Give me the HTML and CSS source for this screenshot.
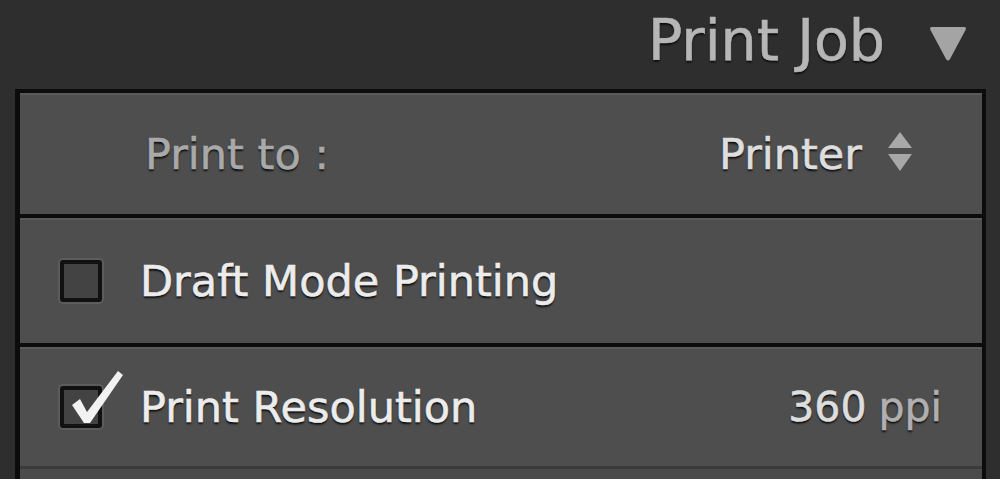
FILE: index.html
```html
<!DOCTYPE html>
<html lang="en">
<head>
    <meta charset="UTF-8">
    <meta name="viewport" content="width=device-width, initial-scale=1.0">
    <title>Print Job</title>
    <link rel="stylesheet" href="styles.css">
</head>
<body>
    <div class="panel-header">
        <h2>Print Job</h2>
        <svg class="collapse" viewBox="0 0 40 40" width="40" height="40">
            <path d="M4 4 L36 4 Q39 4 37.5 7 L22 36 Q20 39 18 36 L2.5 7 Q1 4 4 4 Z" fill="#a4a4a4"/>
        </svg>
    </div>

    <div class="panel">
        <div class="row row-select">
            <span class="label">Print to :</span>
            <span class="value">Printer
                <svg class="updown" viewBox="0 0 24 40" width="24" height="40">
                    <path d="M12 0 L24 16 L0 16 Z" fill="#a8a8a8"/>
                    <path d="M0 22 L24 22 L12 39 Z" fill="#a8a8a8"/>
                </svg>
            </span>
        </div>
        <div class="row">
            <span class="checkbox"></span>
            <span class="name">Draft Mode Printing</span>
        </div>
        <div class="row">
            <span class="checkbox checked">
                <svg class="tick" viewBox="0 0 60 60" width="60" height="60">
                    <path d="M4 35 L12 29 L19 42 L50 1 L55 5 L22 53 L16 53 Z" fill="#f2f2f2"/>
                </svg>
            </span>
            <span class="name">Print Resolution</span>
            <span class="value res">360 <span class="unit">ppi</span></span>
        </div>
        <div class="row row-next"></div>
    </div>
</body>
</html>
```

FILE: styles.css
```css
body {
    margin: 0;
    background-color: #2e2e2e;
    font-family: "DejaVu Sans", "Liberation Sans", sans-serif;
    font-size: 43px;
    height: 479px;
    overflow: hidden;
}

.panel-header {
    height: 89px;
    display: flex;
    justify-content: flex-end;
    align-items: center;
    padding-right: 32px;
}
.panel-header h2 {
    margin: 0 43px 0 0;
    font-size: 57px;
    font-weight: normal;
    color: #b6b6b6;
    -webkit-text-stroke: 0.6px #b6b6b6;
    text-shadow: 0 2px 2px rgba(0, 0, 0, 0.8);
    padding-bottom: 10px;
}
.collapse {
    margin-bottom: 4px;
}

.panel {
    margin-left: 15px;
    width: 962px;
    background: #0c0c0c;
    border-left: 5px solid #0c0c0c;
    border-right: 4px solid #0c0c0c;
    border-top: 4px solid #0c0c0c;
    display: flex;
    flex-direction: column;
    gap: 4px;
}

.row {
    display: flex;
    align-items: center;
    background: #4e4e4e;
    box-shadow: inset 0 2px 0 #5a5a5a;
    padding: 0 40px;
    height: 121px;
    color: #ececec;
    -webkit-text-stroke: 0.6px currentColor;
    text-shadow: 0 2px 2px rgba(0, 0, 0, 0.85);
}
.row + .row {
    height: 125px;
}
.row:nth-child(3) {
    height: 119px;
}
.row.row-next {
    height: 10px;
    margin-top: -4px;
    border-top: 3px solid #3a3a3a;
    box-shadow: none;
    background: #4b4b4b;
}

.row-select {
    padding-left: 125px;
    padding-right: 70px;
}
.label {
    color: #a9a9a9;
}
.value {
    margin-left: auto;
    display: flex;
    align-items: center;
    color: #dedede;
}
.value.res {
    font-size: 41px;
}
.updown {
    margin-left: 26px;
    margin-bottom: 4px;
}
.unit {
    color: #b0b0b0;
    margin-left: 12px;
}

.checkbox {
    position: relative;
    width: 34px;
    height: 34px;
    border: 4px solid #111;
    border-radius: 3px;
    background: #434343;
    box-shadow: 0 0 0 2px #5c5c5c;
    margin-right: 38px;
    flex-shrink: 0;
}
.tick {
    position: absolute;
    left: 4px;
    top: -20px;
}
```
